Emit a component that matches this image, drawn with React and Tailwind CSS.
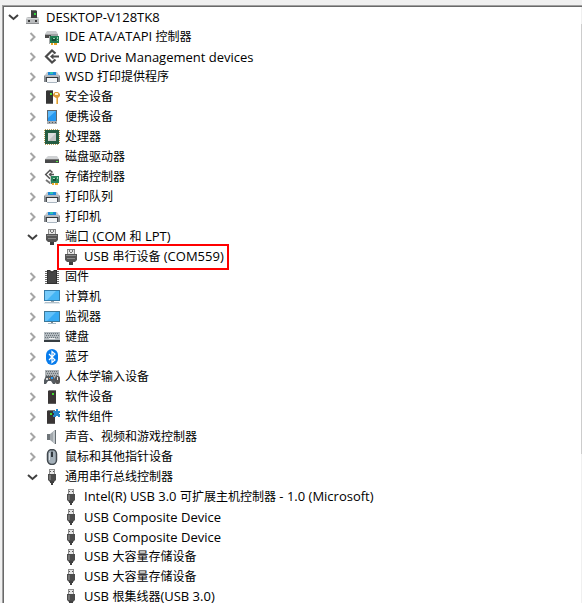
import { useState } from 'react';

const icons = {
  computer: (
    <>
      <path d="M6 1h4l2 1v7H6z" fill="#3f3f3f" />
      <path d="M6 1h4l2 1H7z" fill="#777" />
      <rect x="9" y="4" width="2" height="2" fill="#35d43d" />
      <path d="M3 8h3v1h6V8h1l1 1v6H1V9z" fill="#b9bbbd" />
      <path d="M1 9h13v1H1z" fill="#d7d9da" />
      <path d="M3 11h2v2H3zM10 11h2v2h-2z" fill="#3a3a3a" />
      <path d="M1 14h13v1H1z" fill="#8d8f91" />
    </>
  ),
  ide: (
    <>
      <path d="M3 2h9l2 3H1z" fill="#c9cbcd" />
      <path d="M1 5h13v4H1z" fill="#a0a2a4" />
      <path d="M1 6h6v3H1z" fill="#4a4a4a" />
      <path d="M6 7h9v7H6z" fill="#1f7a50" />
      <path d="M5 7h1v8H5z" fill="#a4a8a8" />
      <path d="M8 9h4v3H8z" fill="#194d39" />
      <path d="M9 9h2v1H9zM13 8h1v2h-1zM13 11h1v1h-1z" fill="#8fd6a8" />
      <path d="M7 14h2v2H7zM10 14h3v2h-3z" fill="#e7a325" />
    </>
  ),
  wd: (
    <>
      <path d="M11.500 4.500 8 1.500 2 7.500l6 6 3.500-3" fill="none" stroke="#4a4a4a" strokeWidth="2.200" />
      <path d="M6 7.500l3.500-3v2H15v2H9.500v2z" fill="#4a4a4a" />
    </>
  ),
  printer: (
    <>
      <path d="M4 3h8v3H4z" fill="#2089d6" />
      <path d="M6 3h3v2H6z" fill="#2dc4b0" />
      <path d="M3 3h1v3H1zM12 3h1l2 3h-3z" fill="#c5c9cd" />
      <path d="M1 6h14l1 1v6h-2V9H2v4H0V7z" fill="#85898d" />
      <path d="M1 6h14v2H1z" fill="#b4b9be" />
      <path d="M2 8h12v1H2z" fill="#35383b" />
      <path d="M3 9h10v4H3z" fill="#f3f5f7" />
      <path d="M2 9h1v4H2zM13 9h1v4h-1z" fill="#4b4f53" />
      <path d="M3 13h10v1H3z" fill="#aab5c0" />
    </>
  ),
  security: (
    <>
      <path d="M2 2l2-1h5v14H2z" fill="#353535" />
      <path d="M2 2l2-1h5v1z" fill="#777" />
      <path d="M6 4h2v2H6z" fill="#4cdd3b" />
      <path d="M2 14h7v1H2z" fill="#666" />
      <path d="M9 5l2-2h3l2 2v2l-2 2v6h-2V9l-3-2z" fill="#d99a38" />
      <path d="M11 4h3v2h-3z" fill="#fff2cf" />
      <path d="M12 9h1v6h-1z" fill="#f5cb78" />
    </>
  ),
  portable: (
    <>
      <path d="M3 1h10v14H3z" fill="#5e666d" />
      <path d="M4 2h8v10H4z" fill="#2698f0" />
      <path d="M4 2h8L4 9z" fill="#5bb9fb" />
      <path d="M3 12h10v3H3z" fill="#a7adb2" />
      <path d="M5 13h1v1H5zM8 13h1v1H8zM11 13h1v1h-1z" fill="#555" />
    </>
  ),
  cpu: (
    <>
      <path d="M1 .5h14M1 15.500h14M.5 1v14M15.500 1v14" stroke="#b69e59" strokeDasharray="1 1" />
      <path d="M1 1h14v14H1z" fill="#245c42" />
      <path d="M4 4h8v8H4z" fill="#c2c4c4" />
      <path d="M4 4h8l-8 8z" fill="#dcdddc" />
    </>
  ),
  disk: (
    <>
      <path d="M4 7h9l2 3H1z" fill="#d0d2d4" />
      <path d="M1 10h14v4H1z" fill="#48494a" />
      <path d="M1 10h14v1H1z" fill="#777" />
      <path d="M12 12h2v1h-2z" fill="#55e640" />
    </>
  ),
  storage: (
    <>
      <path d="M8.500 3.500 6 1.200 1.700 5.500 6 9.800M5 5.500h5" fill="none" stroke="#555" strokeWidth="1.500" />
      <path d="M4.500 5.500 7.500 3v5z" fill="#555" />
      <path d="M2 11l4 3h2" fill="none" stroke="#777" strokeWidth="2" />
      <path d="M6 7h9v7H6z" fill="#27845b" />
      <path d="M6 7h1v8H6z" fill="#c3c8c6" />
      <path d="M9 9h3v3H9z" fill="#174b37" />
      <path d="M13 8h1v2h-1zM9 9h2v1H9z" fill="#9cdbb2" />
      <path d="M8 14h2v2H8zM11 14h3v2h-3z" fill="#e9ad2e" />
    </>
  ),
  port: (
    <>
      <path d="M4 0h8v6H4z" fill="#8b8b8b" />
      <path d="M5 1h6v4H5z" fill="#e4e4e4" />
      <path d="M6 1h1v2H6zM9 1h1v2H9zM7 3h2v1H7z" fill="#777" />
      <path d="M2 5h12v6l-2 2H4l-2-2z" fill="#555" />
      <path d="M3 6h10v1H3zM4 9h8v1H4z" fill="#8b8b8b" />
      <path d="M6 13h4v3H6z" fill="#3d3d3d" />
    </>
  ),
  firmware: (
    <>
      <path d="M1 2.500h14M1 4.500h14M1 6.500h14M1 8.500h14M1 10.500h14M1 12.500h14M1 14.500h14" stroke="#6a6a6a" />
      <path d="M3 1h3l2 2 2-2h3v14H3z" fill="#303030" />
      <path d="M4 2h2l2 2 2-2h2v12H4z" fill="#454545" />
    </>
  ),
  desktop: (
    <>
      <path d="M0 1h16v11H0z" fill="#347ca9" />
      <path d="M1 2h14v9H1z" fill="#45b5f5" />
      <path d="M1 2h11L3 11H1z" fill="#76cbfb" />
      <path d="M7 12h3v1H7z" fill="#95a0a7" />
      <path d="M1 13h14l1 2H0z" fill="#b2c0ca" />
      <path d="M0 14h16v1H0z" fill="#e1e8ed" />
    </>
  ),
  monitor: (
    <>
      <path d="M0 2h16v11H0z" fill="#3b7899" />
      <path d="M1 3h14v9H1z" fill="#36aaf4" />
      <path d="M1 3h11L3 12H1z" fill="#62c1fa" />
      <path d="M7 13h2v1H7z" fill="#7d898f" />
      <path d="M4 14h8v1H4z" fill="#a6bbc7" />
    </>
  ),
  keyboard: (
    <>
      <path d="M0 3h16v9H0z" fill="#b3babf" />
      <path d="M1 4.500h14M2 6.500h13M1 8.500h14" stroke="#6b757c" strokeDasharray="1 1" />
      <path d="M5 9h6v1H5z" fill="#eef0f1" />
      <path d="M0 11h16v2H0z" fill="#363d42" />
    </>
  ),
  bluetooth: (
    <>
      <rect x="2" y="0" width="12" height="16" rx="6" fill="#087cec" />
      <path d="M5 5l6 6-3 2.500v-11L11 5l-6 6" fill="none" stroke="#fff" strokeWidth="1.200" />
    </>
  ),
  hid: (
    <>
      <path d="M1 1h14v9H1z" fill="#aeb3b6" />
      <path d="M2 2.500h12M3 4.500h12M2 6.500h12" stroke="#6a7277" strokeDasharray="1 1" />
      <path d="M2 7h7l2 3v5H9l-2-3H4l-2 3H0v-4z" fill="#555b60" />
      <path d="M2 9h2v2H2z" fill="#d5d7d9" />
      <path d="M7 8h2v2H7z" fill="#2a97ed" />
      <path d="M5 9h1v1H5z" fill="#e8aa7c" />
      <rect x="11" y="7" width="5" height="8" rx="2" fill="#555" />
      <path d="M13 8h1v3h-1z" fill="#ddd" />
    </>
  ),
  software: (
    <>
      <path d="M4 2l2-1h6v14H4z" fill="#393535" />
      <path d="M4 2l2-1h6v1z" fill="#777" />
      <path d="M8 4h2v2H8z" fill="#43d92e" />
      <path d="M4 14h8v1H4z" fill="#5e5e5e" />
    </>
  ),
  component: (
    <>
      <path d="M3 2l2-1h6v14H3z" fill="#393535" />
      <path d="M3 2l2-1h6v1z" fill="#777" />
      <path d="M6 4h2v2H6z" fill="#43d92e" />
      <path d="M3 14h8v1H3z" fill="#5e5e5e" />
      <path d="M9 2h3V0h2v2h2v2h-1v1h1v3h-2V7h-2v1H9V6h1V4H9z" fill="#2587ca" />
    </>
  ),
  speaker: (
    <>
      <path d="M3 5h3v6H3z" fill="#6e7478" />
      <path d="M6 5l5-4v14l-5-4z" fill="#a2a8ad" />
      <path d="M9 3l2-2v14l-2-2z" fill="#c0c6ca" />
      <path d="M11 1h1v14h-1z" fill="#646b70" />
    </>
  ),
  mouse: (
    <>
      <rect x="3.500" y=".5" width="9" height="15" rx="4.500" fill="#a4b0b9" stroke="#434a50" strokeWidth="1.500" />
      <path d="M5.500 4v7" fill="none" stroke="#dce2e6" />
      <path d="M7 3h2v5H7z" fill="#31383e" />
      <path d="M8 1v2" stroke="#59636b" />
    </>
  ),
  usb: (
    <>
      <path d="M5 0h6v6H5z" fill="#909090" />
      <path d="M6 1h4v4H6z" fill="#e6e6e6" />
      <path d="M6 2h1v1H6zM9 2h1v1H9z" fill="#555" />
      <path d="M4 5h8v6l-2 2H6l-2-2z" fill="#4b4b4b" />
      <path d="M5 6h2v5H5z" fill="#737373" />
      <path d="M6 12h4v2H9v2H7v-2H6z" fill="#3f3f3f" />
    </>
  ),
};

const categories = [
  { icon: 'ide', label: 'IDE ATA/ATAPI 控制器' },
  { icon: 'wd', label: 'WD Drive Management devices' },
  { icon: 'printer', label: 'WSD 打印提供程序' },
  { icon: 'security', label: '安全设备' },
  { icon: 'portable', label: '便携设备' },
  { icon: 'cpu', label: '处理器' },
  { icon: 'disk', label: '磁盘驱动器' },
  { icon: 'storage', label: '存储控制器' },
  { icon: 'printer', label: '打印队列' },
  { icon: 'printer', label: '打印机' },
  {
    icon: 'port',
    label: '端口 (COM 和 LPT)',
    children: [{ icon: 'port', label: 'USB 串行设备 (COM559)', marked: true }],
  },
  { icon: 'firmware', label: '固件' },
  { icon: 'desktop', label: '计算机' },
  { icon: 'monitor', label: '监视器' },
  { icon: 'keyboard', label: '键盘' },
  { icon: 'bluetooth', label: '蓝牙' },
  { icon: 'hid', label: '人体学输入设备' },
  { icon: 'software', label: '软件设备' },
  { icon: 'component', label: '软件组件' },
  { icon: 'speaker', label: '声音、视频和游戏控制器' },
  { icon: 'mouse', label: '鼠标和其他指针设备' },
  {
    icon: 'usb',
    label: '通用串行总线控制器',
    children: [
      { icon: 'usb', label: 'Intel(R) USB 3.0 可扩展主机控制器 - 1.0 (Microsoft)' },
      { icon: 'usb', label: 'USB Composite Device' },
      { icon: 'usb', label: 'USB Composite Device' },
      { icon: 'usb', label: 'USB 大容量存储设备' },
      { icon: 'usb', label: 'USB 大容量存储设备' },
      { icon: 'usb', label: 'USB 根集线器(USB 3.0)' },
    ],
  },
];

// Latin runs are set one size larger than the Chinese text around them.
function Label({ text }) {
  const runs = text.match(/[\u0020-\u007e]+|[^\u0020-\u007e]+/g);
  return (
    <span className="pb-0.5 leading-4 whitespace-pre">
      {runs.map((run, i) => (
        <span key={i} className={run.charCodeAt(0) < 127 ? 'text-[13px]/4' : 'text-xs/4'}>
          {run}
        </span>
      ))}
    </span>
  );
}

function Node({ node, root = false }) {
  const [open, setOpen] = useState(root || Boolean(node.children));
  const leaf = node.leaf;
  return (
    <li role="treeitem" aria-expanded={leaf ? undefined : open}>
      <div className="flex h-5 items-center">
        {leaf ? (
          <span className="w-4 shrink-0" />
        ) : (
          <button
            type="button"
            aria-label={node.label}
            onClick={() => setOpen(!open)}
            className="flex size-4 shrink-0 items-center justify-center"
          >
            <svg viewBox="0 0 16 16" className="size-4" fill="none" strokeWidth="2">
              {open ? (
                <path d="M4 6l4.500 4L13 6" stroke="#404040" />
              ) : (
                <path d="M6.500 4l4 4-4 4" stroke="#a6a6a6" />
              )}
            </svg>
          </button>
        )}
        <span className="relative ml-1 flex h-5 items-center gap-[5px]">
          <svg viewBox="0 0 16 16" className="size-4 shrink-0" aria-hidden="true">
            {icons[node.icon]}
          </svg>
          <Label text={node.label} />
          {node.marked && <span className="absolute -inset-y-[3px] -right-[5px] -left-1.5 border-2 border-[#ff0000]" />}
        </span>
      </div>
      {open && node.children && (
        <ul role="group" className="pl-[19px]">
          {node.children.map((child, i) => (
            <Node key={i} node={root ? child : { ...child, leaf: true }} />
          ))}
        </ul>
      )}
    </li>
  );
}

export default function App() {
  return (
    <div className="h-screen overflow-hidden bg-[#f0f0f0] pt-[5px] pl-0.5 font-['Open_Sans','Noto_Sans_CJK_SC',sans-serif] text-black">
      <div className="h-full border-t border-l border-[#a0a0a0]">
        <div className="flex h-full border-t border-l border-[#696969] bg-white">
          <ul role="tree" className="min-w-0 grow pl-px leading-5">
            <Node root node={{ icon: 'computer', label: 'DESKTOP-V128TK8', children: categories }} />
          </ul>
          <div className="w-px shrink-0 bg-[#f0f0f0] pt-[17px]">
            <div className="h-[430px] bg-[#cdcdcd]" />
          </div>
        </div>
      </div>
    </div>
  );
}
